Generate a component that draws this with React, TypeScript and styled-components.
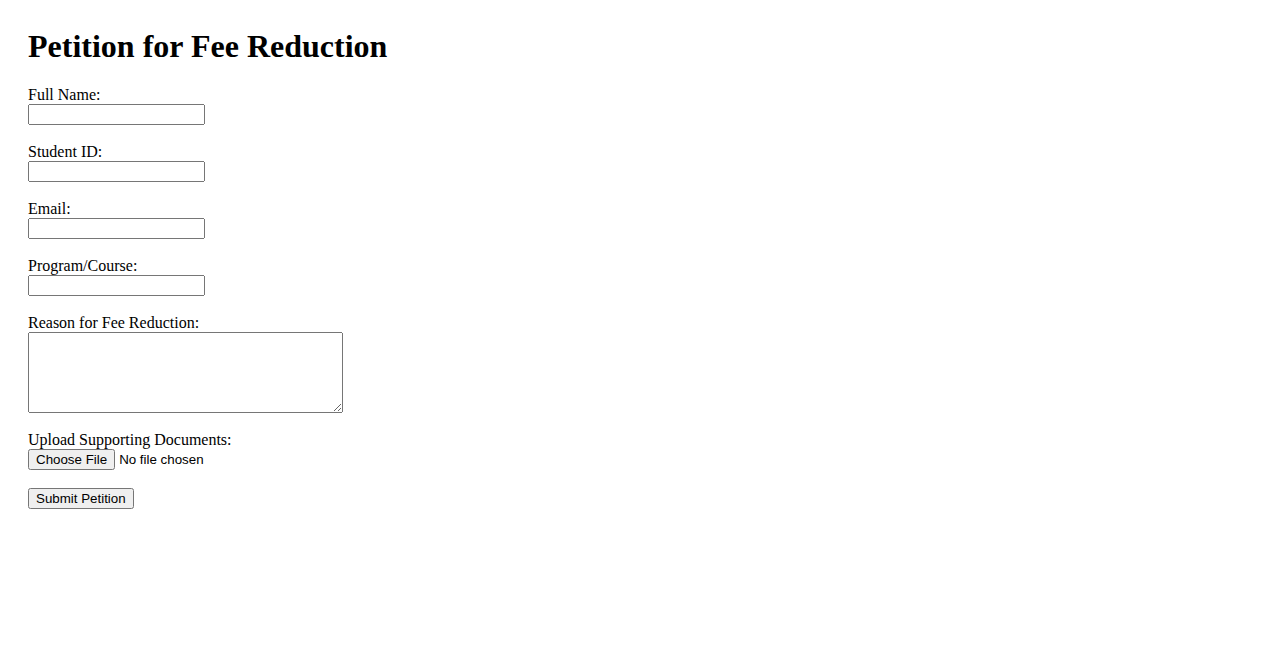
import { createGlobalStyle, styled } from "styled-components";

const GlobalStyle = createGlobalStyle`
  body {
    margin: 0;
    padding: 28px;
    font-family: "Liberation Serif", "Times New Roman", serif;
    font-size: 16px;
    color: #000;
    background: #fff;
  }
`;

const Title = styled.h1`
  margin: 0 0 21.44px;
  font-size: 32px;
  font-weight: bold;
`;

const Field = styled.div`
  margin-bottom: 18px;
`;

const Label = styled.label`
  display: block;
`;

const TextInput = styled.input`
  display: block;
  box-sizing: border-box;
  width: 177px;
  height: 21px;
  margin: 0;
  font-family: "Liberation Sans", Arial, sans-serif;
  font-size: 13.33px;
`;

const TextArea = styled.textarea`
  display: block;
  box-sizing: border-box;
  width: 315px;
  height: 81px;
  margin: 0;
  font-family: "Liberation Mono", monospace;
  font-size: 13.33px;
`;

const FileInput = styled.input`
  display: block;
  margin: 0;
  font-family: "Liberation Sans", Arial, sans-serif;
  font-size: 13.33px;
`;

const SubmitButton = styled.button`
  margin: 0;
  font-family: "Liberation Sans", Arial, sans-serif;
  font-size: 13.33px;
`;

export default function App() {
  return (
    <>
      <GlobalStyle />
      <Title>Petition for Fee Reduction</Title>
      <form onSubmit={(e) => e.preventDefault()}>
        <Field>
          <Label htmlFor="name">Full Name:</Label>
          <TextInput id="name" type="text" />
        </Field>
        <Field>
          <Label htmlFor="sid">Student ID:</Label>
          <TextInput id="sid" type="text" />
        </Field>
        <Field>
          <Label htmlFor="email">Email:</Label>
          <TextInput id="email" type="email" />
        </Field>
        <Field>
          <Label htmlFor="program">Program/Course:</Label>
          <TextInput id="program" type="text" />
        </Field>
        <Field>
          <Label htmlFor="reason">Reason for Fee Reduction:</Label>
          <TextArea id="reason" />
        </Field>
        <Field>
          <Label htmlFor="docs">Upload Supporting Documents:</Label>
          <FileInput id="docs" type="file" />
        </Field>
        <SubmitButton type="submit">Submit Petition</SubmitButton>
      </form>
    </>
  );
}
